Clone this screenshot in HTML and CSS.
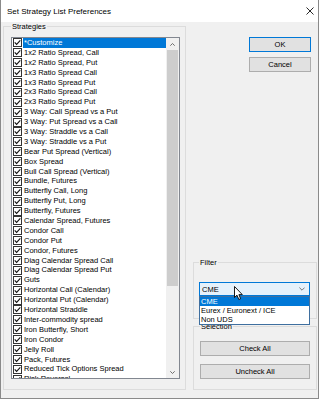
FILE: index.html
```html
<!DOCTYPE html>
<html>
<head>
<meta charset="utf-8">
<link rel="stylesheet" href="styles.css">
</head>
<body>
<svg width="0" height="0" style="position:absolute">
  <symbol id="chk" viewBox="0 0 9 9">
    <rect x="0.5" y="0.5" width="8" height="8" fill="#fff" stroke="#333"/>
    <path d="M1.7 4.4 L3.6 6.4 L7.3 2.4" fill="none" stroke="#111" stroke-width="1.1"/>
  </symbol>
</svg>
<div class="win">
  <div class="titlebar">
    <span class="title">Set Strategy List Preferences</span>
    <svg class="close" viewBox="0 0 8 8" width="8" height="8"><path d="M0.5 0.5 L7.5 7.5 M7.5 0.5 L0.5 7.5" stroke="#111" stroke-width="0.9" fill="none"/></svg>
  </div>
  <div class="body">
    <fieldset class="grp strategies">
      <legend>Strategies</legend>
      <div class="listbox">
        <div class="items">
          <div class="row sel"><svg class="cb"><use href="#chk"/></svg><span class="lbl">*Customize</span></div>
          <div class="row"><svg class="cb"><use href="#chk"/></svg><span class="lbl">1x2 Ratio Spread, Call</span></div>
          <div class="row"><svg class="cb"><use href="#chk"/></svg><span class="lbl">1x2 Ratio Spread, Put</span></div>
          <div class="row"><svg class="cb"><use href="#chk"/></svg><span class="lbl">1x3 Ratio Spread Call</span></div>
          <div class="row"><svg class="cb"><use href="#chk"/></svg><span class="lbl">1x3 Ratio Spread Put</span></div>
          <div class="row"><svg class="cb"><use href="#chk"/></svg><span class="lbl">2x3 Ratio Spread Call</span></div>
          <div class="row"><svg class="cb"><use href="#chk"/></svg><span class="lbl">2x3 Ratio Spread Put</span></div>
          <div class="row"><svg class="cb"><use href="#chk"/></svg><span class="lbl">3 Way: Call Spread vs a Put</span></div>
          <div class="row"><svg class="cb"><use href="#chk"/></svg><span class="lbl">3 Way: Put Spread vs a Call</span></div>
          <div class="row"><svg class="cb"><use href="#chk"/></svg><span class="lbl">3 Way: Straddle vs a Call</span></div>
          <div class="row"><svg class="cb"><use href="#chk"/></svg><span class="lbl">3 Way: Straddle vs a Put</span></div>
          <div class="row"><svg class="cb"><use href="#chk"/></svg><span class="lbl">Bear Put Spread (Vertical)</span></div>
          <div class="row"><svg class="cb"><use href="#chk"/></svg><span class="lbl">Box Spread</span></div>
          <div class="row"><svg class="cb"><use href="#chk"/></svg><span class="lbl">Bull Call Spread (Vertical)</span></div>
          <div class="row"><svg class="cb"><use href="#chk"/></svg><span class="lbl">Bundle, Futures</span></div>
          <div class="row"><svg class="cb"><use href="#chk"/></svg><span class="lbl">Butterfly Call, Long</span></div>
          <div class="row"><svg class="cb"><use href="#chk"/></svg><span class="lbl">Butterfly Put, Long</span></div>
          <div class="row"><svg class="cb"><use href="#chk"/></svg><span class="lbl">Butterfly, Futures</span></div>
          <div class="row"><svg class="cb"><use href="#chk"/></svg><span class="lbl">Calendar Spread, Futures</span></div>
          <div class="row"><svg class="cb"><use href="#chk"/></svg><span class="lbl">Condor Call</span></div>
          <div class="row"><svg class="cb"><use href="#chk"/></svg><span class="lbl">Condor Put</span></div>
          <div class="row"><svg class="cb"><use href="#chk"/></svg><span class="lbl">Condor, Futures</span></div>
          <div class="row"><svg class="cb"><use href="#chk"/></svg><span class="lbl">Diag Calendar Spread Call</span></div>
          <div class="row"><svg class="cb"><use href="#chk"/></svg><span class="lbl">Diag Calendar Spread Put</span></div>
          <div class="row"><svg class="cb"><use href="#chk"/></svg><span class="lbl">Guts</span></div>
          <div class="row"><svg class="cb"><use href="#chk"/></svg><span class="lbl">Horizontal Call (Calendar)</span></div>
          <div class="row"><svg class="cb"><use href="#chk"/></svg><span class="lbl">Horizontal Put (Calendar)</span></div>
          <div class="row"><svg class="cb"><use href="#chk"/></svg><span class="lbl">Horizontal Straddle</span></div>
          <div class="row"><svg class="cb"><use href="#chk"/></svg><span class="lbl">Inter-commodity spread</span></div>
          <div class="row"><svg class="cb"><use href="#chk"/></svg><span class="lbl">Iron Butterfly, Short</span></div>
          <div class="row"><svg class="cb"><use href="#chk"/></svg><span class="lbl">Iron Condor</span></div>
          <div class="row"><svg class="cb"><use href="#chk"/></svg><span class="lbl">Jelly Roll</span></div>
          <div class="row"><svg class="cb"><use href="#chk"/></svg><span class="lbl">Pack, Futures</span></div>
          <div class="row"><svg class="cb"><use href="#chk"/></svg><span class="lbl">Reduced Tick Options Spread</span></div>
          <div class="row"><svg class="cb"><use href="#chk"/></svg><span class="lbl">Risk Reversal</span></div>
        </div>
        <div class="vscroll">
          <div class="arr"><svg width="5" height="3" viewBox="0 0 5 3"><path d="M0.3 2.7 L2.5 0.5 L4.7 2.7" fill="none" stroke="#606060" stroke-width="0.9"/></svg></div>
          <div class="thumb"></div>
          <div class="track"></div>
          <div class="arr"><svg width="5" height="3" viewBox="0 0 5 3"><path d="M0.3 0.3 L2.5 2.5 L4.7 0.3" fill="none" stroke="#606060" stroke-width="0.9"/></svg></div>
        </div>
      </div>
    </fieldset>
    <div class="side">
      <button class="btn dlg default">OK</button>
      <button class="btn dlg">Cancel</button>
      <fieldset class="grp filter">
        <legend>Filter</legend>
        <div class="combo">
          <span class="val">CME</span>
          <svg class="chev" width="6" height="4" viewBox="0 0 6 4"><path d="M0.4 0.6 L3 3.2 L5.6 0.6" fill="none" stroke="#555" stroke-width="0.8"/></svg>
          <div class="dropdown">
            <div class="opt hl">CME</div>
            <div class="opt">Eurex / Euronext / ICE</div>
            <div class="opt">Non UDS</div>
          </div>
        </div>
      </fieldset>
      <fieldset class="grp selection">
        <legend>Selection</legend>
        <button class="btn wide">Check All</button>
        <button class="btn wide">Uncheck All</button>
      </fieldset>
    </div>
  </div>
  <svg class="cursor" width="10" height="15" viewBox="0 0 10 15"><path d="M0.5 0.5 L0.5 11.5 L3 9.2 L4.8 13.5 L6.6 12.7 L4.9 8.6 L8.3 8.6 Z" fill="#fff" stroke="#000" stroke-width="0.9" stroke-linejoin="round"/></svg>
</div>
</body>
</html>
```

FILE: styles.css
```css
* { box-sizing: border-box; }
html, body { margin: 0; padding: 0; }
body {
  width: 321px;
  height: 400px;
  overflow: hidden;
  background: #fff;
  font-family: "Liberation Sans", Arial, sans-serif;
  font-size: 7.5px;
  color: #000;
}
.win {
  position: relative;
  width: 319px;
  height: 399px;
  border: 1px solid #8a8a8a;
  border-top: none;
  background: #f0f0f0;
  display: flex;
  flex-direction: column;
}
.titlebar {
  flex: none;
  height: 22px;
  background: #fff;
  display: flex;
  align-items: center;
  justify-content: space-between;
  padding: 1px 4px 0 6px;
}
.title { font-size: 8px; }
.close { display: block; margin-top: -1px; }
.body {
  flex: 1;
  display: flex;
  padding: 0 1px 8px 2px;
}
.grp {
  margin: 0;
  border: 1px solid #dcdcdc;
  min-width: 0;
}
.grp legend {
  padding: 0 1px;
  line-height: 9px;
  font-size: 7.5px;
}
.strategies {
  width: 183px;
  padding: 6px 5px 0 7px;
}
.listbox {
  height: 342px;
  border: 1px solid #828790;
  background: #fff;
  display: flex;
  overflow: hidden;
}
.items {
  flex: 1;
  min-width: 0;
  overflow: hidden;
}
.row {
  height: 9.9px;
  display: flex;
  align-items: center;
  white-space: nowrap;
}
.cb {
  flex: none;
  width: 9px;
  height: 9px;
  margin-left: 1px;
}
.lbl {
  flex: 1;
  margin-left: 1px;
  padding-left: 1px;
  line-height: 9.9px;
  height: 9.9px;
}
.row.sel .lbl { background: #0078d7; color: #fff; }
.vscroll {
  flex: none;
  width: 13px;
  background: #f0f0f0;
  display: flex;
  flex-direction: column;
  align-items: center;
}
.arr {
  flex: none;
  height: 12px;
  width: 13px;
  display: flex;
  align-items: center;
  justify-content: center;
}
.arr svg { display: block; }
.thumb {
  flex: none;
  width: 11px;
  height: 236px;
  background: #cdcdcd;
}
.track { flex: 1; }
.side {
  width: 124px;
  margin-left: 7px;
  padding-top: 15px;
  display: flex;
  flex-direction: column;
}
.btn {
  font-family: inherit;
  font-size: 7.5px;
  color: #000;
  background: #e1e1e1;
  border: 1px solid #adadad;
  padding: 0;
  margin: 0;
  height: 15px;
  line-height: 13px;
  display: block;
}
.dlg {
  width: 62px;
  align-self: flex-end;
  margin-right: 6px;
}
.dlg + .dlg { margin-top: 5px; }
.default { border-color: #0078d7; }
.filter {
  margin-top: 186px;
  padding: 15px 6px 22px 5px;
}
.combo {
  position: relative;
  height: 14px;
  border: 1px solid #0078d7;
  background: #e5f1fb;
  display: flex;
  align-items: center;
  justify-content: space-between;
  padding: 0 4px 0 2px;
}
.chev { display: block; }
.dropdown {
  position: absolute;
  left: -1px;
  right: -1px;
  top: 13px;
  background: #fff;
  border: 1px solid #3f6f9f;
  z-index: 2;
}
.opt {
  height: 9px;
  line-height: 9px;
  padding-left: 1px;
  white-space: nowrap;
}
.opt.hl { background: #0078d7; color: #fff; }
.selection {
  margin-top: 3px;
  flex: 1;
  padding: 10px 6px 0 6px;
}
.wide { width: 110px; }
.wide + .wide { margin-top: 8px; }
.cursor {
  position: absolute;
  left: 233px;
  top: 286px;
  z-index: 3;
}
```
